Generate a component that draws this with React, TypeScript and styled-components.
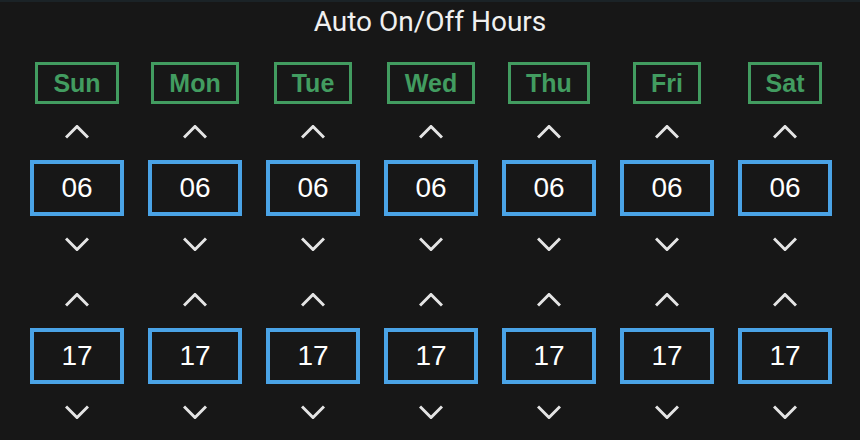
import React, { useState } from 'react';
import styled, { createGlobalStyle } from 'styled-components';

const GlobalStyle = createGlobalStyle`
  html, body {
    margin: 0;
    padding: 0;
    background: #171717;
  }
  body {
    font-family: Roboto, "Liberation Sans", sans-serif;
  }
`;

const DAYS = ['Sun', 'Mon', 'Tue', 'Wed', 'Thu', 'Fri', 'Sat'];

const pad = (n: number) => (n < 10 ? `0${n}` : `${n}`);

interface ChevronProps {
  down?: boolean;
}

const Chevron: React.FC<ChevronProps> = ({ down }) => (
  <svg width="24" height="14" viewBox="0 0 24 14">
    <polyline
      points={down ? '1,1.5 12,12.5 23,1.5' : '1,12.5 12,1.5 23,12.5'}
      fill="none"
      stroke="#e4e4e4"
      strokeWidth="3"
    />
  </svg>
);

interface SpinnerProps {
  value: number;
  onChange: (v: number) => void;
}

const Spinner: React.FC<SpinnerProps> = ({ value, onChange }) => (
  <SpinnerWrap>
    <ArrowButton onClick={() => onChange((value + 1) % 24)}>
      <Chevron />
    </ArrowButton>
    <ValueBox>{pad(value)}</ValueBox>
    <ArrowButton onClick={() => onChange((value + 23) % 24)}>
      <Chevron down />
    </ArrowButton>
  </SpinnerWrap>
);

const App: React.FC = () => {
  const [onHours, setOnHours] = useState<number[]>(DAYS.map(() => 6));
  const [offHours, setOffHours] = useState<number[]>(DAYS.map(() => 17));

  const update = (list: number[], i: number, v: number) => list.map((h, j) => (j === i ? v : h));

  return (
    <Page>
      <GlobalStyle />
      <Title>Auto On/Off Hours</Title>
      <Columns>
        {DAYS.map((day, i) => (
          <DayColumn key={day}>
            <DayLabel>{day}</DayLabel>
            <Spinner value={onHours[i]} onChange={(v) => setOnHours(update(onHours, i, v))} />
            <Spinner value={offHours[i]} onChange={(v) => setOffHours(update(offHours, i, v))} />
          </DayColumn>
        ))}
      </Columns>
    </Page>
  );
};

export default App;

const Page = styled.div`
  width: 860px;
  height: 440px;
  box-sizing: border-box;
  border-top: 2px solid #1b2327;
  padding-top: 4px;
  background: #171717;
  display: flex;
  flex-direction: column;
  align-items: center;
  overflow: hidden;
`;

const Title = styled.div`
  font-family: Roboto, sans-serif;
  font-size: 28px;
  line-height: 32px;
  color: #f0f0f0;
`;

const Columns = styled.div`
  display: flex;
  justify-content: center;
  gap: 24px;
  margin-top: 24px;
  margin-left: 2px;
`;

const DayColumn = styled.div`
  width: 94px;
  display: flex;
  flex-direction: column;
  align-items: center;
  gap: 16px;
`;

const DayLabel = styled.div`
  box-sizing: border-box;
  height: 42px;
  padding: 0 15px;
  border: 3px solid #429c60;
  font-family: 'Liberation Sans', Arial, sans-serif;
  font-weight: bold;
  font-size: 25px;
  line-height: 36px;
  color: #429c60;
`;

const SpinnerWrap = styled.div`
  display: flex;
  flex-direction: column;
  align-items: center;
  gap: 16px;
  & + & {
    margin-top: 16px;
  }
`;

const ArrowButton = styled.button`
  width: 40px;
  height: 24px;
  padding: 0;
  border: none;
  background: transparent;
  display: flex;
  align-items: center;
  justify-content: center;
  cursor: pointer;
`;

const ValueBox = styled.div`
  box-sizing: border-box;
  width: 94px;
  height: 56px;
  border: 4px solid #4aa3e6;
  font-family: 'Liberation Sans', Arial, sans-serif;
  font-size: 28px;
  line-height: 48px;
  text-align: center;
  color: #ffffff;
`;
